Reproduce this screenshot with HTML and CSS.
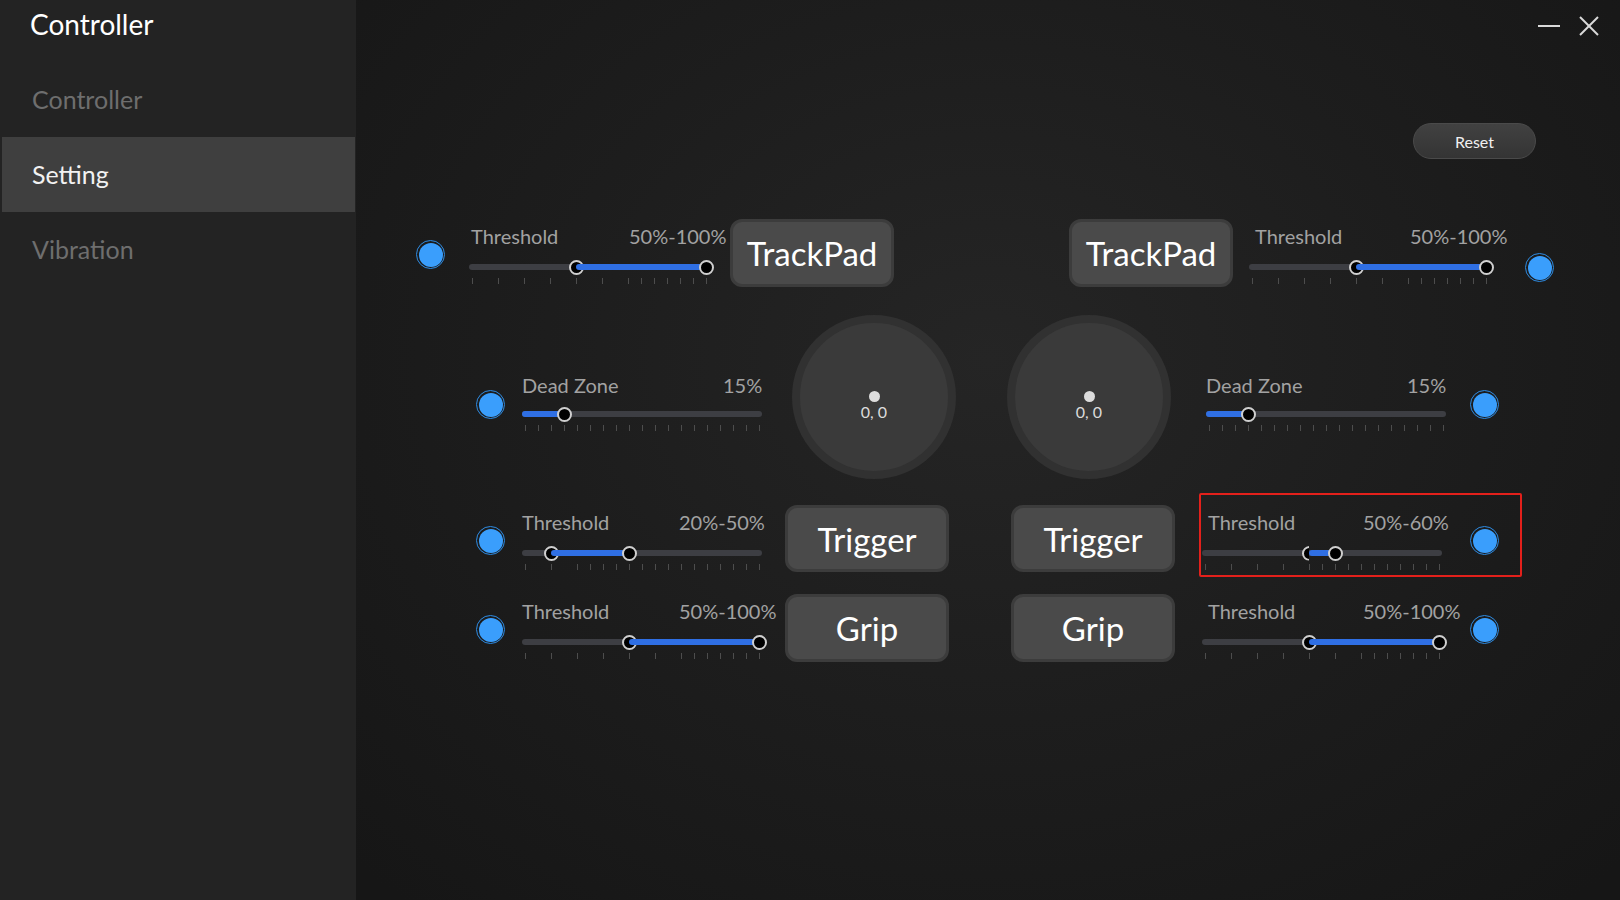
FILE: index.html
```html
<!DOCTYPE html>
<html lang="en">
<head>
    <meta charset="UTF-8">
    <title>Controller</title>
    <link rel="stylesheet" href="styles.css">
</head>
<body>

<div class="app">
    <aside class="sidebar">
        <div class="brand">Controller</div>
        <nav class="nav">
            <a href="#" class="nav-item">Controller</a>
            <a href="#" class="nav-item active">Setting</a>
            <a href="#" class="nav-item">Vibration</a>
        </nav>
    </aside>

    <main class="main">
        <div class="titlebar">
            <svg class="win-btn" width="22" height="20" viewBox="0 0 22 20"><line x1="0" y1="10" x2="22" y2="10"/></svg>
            <svg class="win-btn" width="20" height="20" viewBox="0 0 20 20"><line x1="1" y1="1" x2="19" y2="19"/><line x1="19" y1="1" x2="1" y2="19"/></svg>
        </div>

        <div class="toolbar">
            <button class="reset">Reset</button>
        </div>

        <div class="board">
            <!-- TrackPad -->
            <div class="row r1">
                <span class="toggle lt"></span>
                <div class="slider ls" data-lo="8" data-hi="18" data-dense="13">
                    <div class="slider-head"><span class="lbl">Threshold</span><span class="val">50%-100%</span></div>
                    <div class="track"></div>
                    <div class="ticks"></div>
                </div>
                <div class="pad-btn lb">TrackPad</div>
                <div class="pad-btn rb">TrackPad</div>
                <div class="slider rs inset" data-lo="8" data-hi="18" data-dense="13">
                    <div class="slider-head"><span class="lbl">Threshold</span><span class="val">50%-100%</span></div>
                    <div class="track"></div>
                    <div class="ticks"></div>
                </div>
                <span class="toggle rt"></span>
            </div>

            <!-- Stick -->
            <div class="row r2">
                <span class="toggle lt"></span>
                <div class="slider ls dz" data-hi="3" data-dense="0">
                    <div class="slider-head"><span class="lbl">Dead Zone</span><span class="val">15%</span></div>
                    <div class="track"></div>
                    <div class="ticks"></div>
                </div>
                <div class="stick lb"><span class="stick-dot"></span><span class="stick-pos">0, 0</span></div>
                <div class="stick rb"><span class="stick-dot"></span><span class="stick-pos">0, 0</span></div>
                <div class="slider rs dz" data-hi="3" data-dense="0">
                    <div class="slider-head"><span class="lbl">Dead Zone</span><span class="val">15%</span></div>
                    <div class="track"></div>
                    <div class="ticks"></div>
                </div>
                <span class="toggle rt"></span>
            </div>

            <!-- Trigger -->
            <div class="row r3">
                <span class="toggle lt"></span>
                <div class="slider ls flush" data-lo="2" data-hi="8" data-dense="5">
                    <div class="slider-head"><span class="lbl">Threshold</span><span class="val">20%-50%</span></div>
                    <div class="track"></div>
                    <div class="ticks"></div>
                </div>
                <div class="pad-btn lb">Trigger</div>
                <div class="pad-btn rb">Trigger</div>
                <div class="focus">
                    <div class="slider rs inset clip" data-lo="8" data-hi="10" data-dense="9">
                        <div class="slider-head"><span class="lbl">Threshold</span><span class="val">50%-60%</span></div>
                        <div class="track"></div>
                        <div class="ticks"></div>
                    </div>
                    <span class="toggle rt"></span>
                </div>
            </div>

            <!-- Grip -->
            <div class="row r4">
                <span class="toggle lt"></span>
                <div class="slider ls flush" data-lo="8" data-hi="18" data-dense="13">
                    <div class="slider-head"><span class="lbl">Threshold</span><span class="val">50%-100%</span></div>
                    <div class="track"></div>
                    <div class="ticks"></div>
                </div>
                <div class="pad-btn lb">Grip</div>
                <div class="pad-btn rb">Grip</div>
                <div class="slider rs inset" data-lo="8" data-hi="18" data-dense="13">
                    <div class="slider-head"><span class="lbl">Threshold</span><span class="val">50%-100%</span></div>
                    <div class="track"></div>
                    <div class="ticks"></div>
                </div>
                <span class="toggle rt"></span>
            </div>
        </div>
    </main>
</div>

<script>
// 18 steps of 13px, track padding 3px
const STEP = 13;
const pos = u => 3 + u * STEP;

document.querySelectorAll('.slider').forEach(slider => {
    const track = slider.querySelector('.track');
    const ticks = slider.querySelector('.ticks');
    const hi = Number(slider.dataset.hi);
    const hasLo = slider.dataset.lo !== undefined;
    const lo = hasLo ? Number(slider.dataset.lo) : 0;
    const dense = Number(slider.dataset.dense);

    const start = hasLo ? pos(lo) : 0;
    const fill = document.createElement('span');
    fill.className = 'fill';
    fill.style.left = start + 'px';
    fill.style.width = (pos(hi) - start) + 'px';

    if (hasLo) {
        const t = document.createElement('span');
        t.className = 'thumb thumb-lo';
        t.style.left = (pos(lo) - 7.5) + 'px';
        track.appendChild(t);
    }
    track.appendChild(fill);
    const t2 = document.createElement('span');
    t2.className = 'thumb';
    t2.style.left = (pos(hi) - 7.5) + 'px';
    track.appendChild(t2);

    for (let u = 0; u <= 18; u++) {
        if (u < dense && u % 2 !== 0) continue;
        const tick = document.createElement('span');
        tick.className = 'tick';
        tick.style.left = (u * STEP) + 'px';
        ticks.appendChild(tick);
    }
});
</script>

</body>
</html>
```

FILE: styles.css
```css
body {
    margin: 0;
    overflow: hidden;
    font-family: Lato, "Noto Sans", sans-serif;
    background: #1a1a1a;
}

.app {
    display: flex;
    height: 100vh;
}

/* サイドバー */
.sidebar {
    width: 356px;
    flex: none;
    background: #232323;
}

.brand {
    height: 62px;
    padding-left: 30px;
    font-size: 28px;
    line-height: 48px;
    color: #fff;
}

.nav {
    display: flex;
    flex-direction: column;
}

.nav-item {
    height: 75px;
    line-height: 75px;
    padding-left: 32px;
    font-size: 25px;
    color: #6e6e6e;
    text-decoration: none;
}

.nav-item.active {
    margin: 0 1px 0 2px;
    padding-left: 30px;
    background: #3f3f3f;
    color: #f2f2f2;
}

/* メイン */
.main {
    flex: 1;
    background: radial-gradient(ellipse 70% 80% at 50% 40%, #252525 0%, #1d1d1d 50%, #161616 100%);
}

.titlebar {
    height: 60px;
    box-sizing: border-box;
    display: flex;
    justify-content: flex-end;
    align-items: flex-start;
    gap: 19px;
    padding: 16px 21px 0 0;
}

.win-btn line {
    stroke: #dadada;
    stroke-width: 2;
}

.toolbar {
    display: flex;
    justify-content: flex-end;
    padding: 63px 84px 0 0;
}

.reset {
    width: 123px;
    height: 36px;
    border-radius: 18px;
    border: 1px solid #4a4a4a;
    background: linear-gradient(#414141, #343434);
    color: #f0f0f0;
    font-family: Lato, "Noto Sans", sans-serif;
    font-size: 16px;
}

.board {
    margin-top: 60px;
}

.row {
    display: flex;
    align-items: flex-start;
}

.r1 { height: 68px; }
.r2 { height: 164px; margin-top: 28px; }
.r3 { height: 67px; margin-top: 26px; }
.r4 { height: 68px; margin-top: 22px; }

/* 行ごとの横位置 */
.r1 .lt { margin: 21px 0 0 60px; }
.r1 .ls { margin: 5px 0 0 24px; }
.r1 .lb { margin-left: 21px; }
.r1 .rb { margin-left: 175px; }
.r1 .rs { margin: 5px 0 0 16px; }
.r1 .rt { margin: 34px 0 0 36px; }

.r2 .lt { margin: 75px 0 0 120px; }
.r2 .ls { margin: 58px 0 0 17px; }
.r2 .lb { margin-left: 30px; }
.r2 .rb { margin-left: 51px; }
.r2 .rs { margin: 58px 0 0 35px; }
.r2 .rt { margin: 75px 0 0 24px; }

.r3 .lt, .r4 .lt { margin: 21px 0 0 120px; }
.r3 .ls, .r4 .ls { margin: 5px 0 0 17px; }
.r3 .lb, .r4 .lb { margin-left: 23px; }
.r3 .rb, .r4 .rb { margin-left: 62px; }
.r4 .rs { margin: 5px 0 0 27px; }
.r4 .rt { margin: 21px 0 0 28px; }

/* 赤枠 */
.focus {
    position: relative;
    display: flex;
    align-items: flex-start;
    height: 67px;
    margin-left: 27px;
}

.focus .rs { margin-top: 5px; }
.focus .rt { margin: 21px 0 0 28px; }

.focus::after {
    content: '';
    position: absolute;
    top: -12px;
    left: -3px;
    right: -23px;
    bottom: -5px;
    border: 2px solid #e3201b;
    border-radius: 2px;
}

/* トグル */
.toggle {
    flex: none;
    width: 29px;
    height: 29px;
    box-sizing: border-box;
    border-radius: 50%;
    border: 1.5px solid #2e8be2;
    padding: 1.5px;
}

.toggle::before {
    content: '';
    display: block;
    width: 100%;
    height: 100%;
    border-radius: 50%;
    background: #3a9efc;
}

/* スライダー */
.slider {
    flex: none;
    width: 240px;
}

.slider-head {
    display: flex;
    height: 24px;
    line-height: 24px;
    padding-left: 2px;
    font-size: 20px;
    color: #a2a2a2;
    white-space: nowrap;
}

.slider-head .lbl { width: 158px; flex: none; }
.slider.flush .slider-head { padding-left: 0; }
.slider.flush .lbl { width: 157px; }
.slider.inset .slider-head { padding-left: 6px; }
.slider.inset .lbl { width: 155px; }
.slider.dz .slider-head { padding-left: 0; }
.slider.dz .lbl { width: 201px; }

.track {
    position: relative;
    height: 6px;
    margin-top: 16px;
    border-radius: 3px;
    background: #3d3e43;
}

.slider.dz .track { margin-top: 14px; }

.fill {
    position: absolute;
    top: 0;
    height: 6px;
    border-radius: 3px;
    background: #2f6fe4;
}

.thumb {
    position: absolute;
    top: -4.5px;
    width: 15px;
    height: 15px;
    box-sizing: border-box;
    border-radius: 50%;
    border: 2px solid #cfcfcf;
    background: #000;
}

.slider.clip .thumb-lo {
    clip-path: inset(0 50% 0 0);
}

.ticks {
    position: relative;
    height: 6px;
    margin: 8px 0 0 3px;
}

.tick {
    position: absolute;
    top: 0;
    width: 1px;
    height: 6px;
    background: #4d4d4d;
}

/* ボタン */
.pad-btn {
    flex: none;
    width: 164px;
    height: 68px;
    box-sizing: border-box;
    display: flex;
    align-items: center;
    justify-content: center;
    border: 3px solid #3c3c3c;
    border-radius: 12px;
    background: #4a4a4a;
    color: #fff;
    font-size: 33px;
}

.r3 .pad-btn { height: 67px; }

/* スティック */
.stick {
    flex: none;
    width: 164px;
    height: 164px;
    box-sizing: border-box;
    border-radius: 50%;
    border: 8px solid #313131;
    background: #3a3a3a;
    display: flex;
    flex-direction: column;
    align-items: center;
    justify-content: center;
    padding-top: 18px;
}

.stick-dot {
    width: 11px;
    height: 11px;
    border-radius: 50%;
    background: #dcdcdc;
}

.stick-pos {
    margin-top: 1px;
    font-size: 16px;
    line-height: 18px;
    color: #dcdcdc;
}
```
